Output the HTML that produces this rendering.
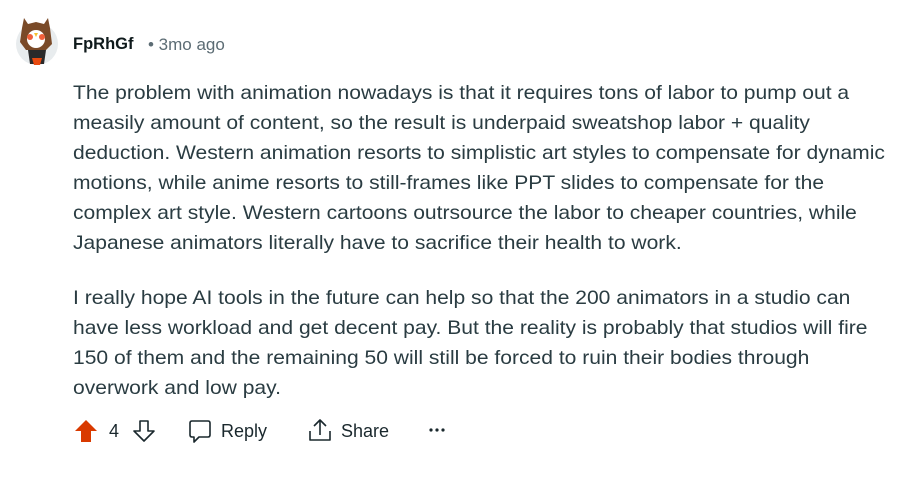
<!DOCTYPE html>
<html><head><style>
body{margin:0;width:908px;height:479px;background:#fff;font-family:"Liberation Sans",sans-serif;color:#1a282d;position:relative;overflow:hidden}
.t{position:absolute;left:73px;font-size:19.5px;line-height:30px;white-space:nowrap;color:#2a3c42;transform:scaleX(1.08);transform-origin:0 0}
.a{position:absolute;top:418px;height:26px;display:flex;align-items:center;font-size:18px;color:#1a282d}
</style></head><body>
<svg style="position:absolute;left:14px;top:14px" width="46" height="52" viewBox="0 0 46 52">
<circle cx="23" cy="30" r="21" fill="#e8ecee"/>
<path d="M8 14 L10 4 L14 10 L22 8 L30 10 L34 4 L36 14 L38 30 L32 36 L12 36 L6 28Z" fill="#7a4a28"/>
<circle cx="22" cy="25" r="9" fill="#fff"/>
<circle cx="16" cy="23" r="3" fill="#f0603a"/><circle cx="28" cy="23" r="3" fill="#f0603a"/>
<path d="M20 19 L24 19 L22 23Z" fill="#f5c030"/>
<path d="M14 36 L32 36 L30 50 L16 50Z" fill="#2a2a2a"/>
<path d="M18 44 L28 44 L26 51 L20 51Z" fill="#e84a10"/>
</svg>
<div style="position:absolute;left:73px;top:35px;font-size:16.5px;font-weight:bold;color:#0f1a1c">FpRhGf</div>
<div style="position:absolute;left:148px;top:35px;font-size:17px;color:#5c6c74">• 3mo ago</div>
<div class="t" style="top:78px">The problem with animation nowadays is that it requires tons of labor to pump out a<br>measily amount of content, so the result is underpaid sweatshop labor + quality<br>deduction. Western animation resorts to simplistic art styles to compensate for dynamic<br>motions, while anime resorts to still-frames like PPT slides to compensate for the<br>complex art style. Western cartoons outrsource the labor to cheaper countries, while<br>Japanese animators literally have to sacrifice their health to work.</div>
<div class="t" style="top:283px">I really hope AI tools in the future can help so that the 200 animators in a studio can<br>have less workload and get decent pay. But the reality is probably that studios will fire<br>150 of them and the remaining 50 will still be forced to ruin their bodies through<br>overwork and low pay.</div>
<svg style="position:absolute;left:74px;top:419px" width="24" height="24" viewBox="0 0 24 24"><path d="M12 1 L23 12 L17 12 L17 23 L7 23 L7 12 L1 12Z" fill="#d93a00"/></svg>
<div class="a" style="left:109px">4</div>
<svg style="position:absolute;left:132px;top:419px" width="24" height="24" viewBox="0 0 24 24"><path d="M8 2 L16 2 L16 12 L22 12 L12 22 L2 12 L8 12Z" fill="none" stroke="#1a282d" stroke-width="1.6" stroke-linejoin="round"/></svg>
<svg style="position:absolute;left:188px;top:419px" width="24" height="24" viewBox="0 0 24 24"><path d="M4 2 L20 2 Q22 2 22 4 L22 16 Q22 18 20 18 L11 18 L6 23 L6 18 L4 18 Q2 18 2 16 L2 4 Q2 2 4 2Z" fill="none" stroke="#1a282d" stroke-width="1.6" stroke-linejoin="round"/></svg>
<div class="a" style="left:221px">Reply</div>
<svg style="position:absolute;left:308px;top:418px" width="24" height="24" viewBox="0 0 24 24"><path d="M2 13 L2 22 L22 22 L22 13 M12 17 L12 2 M6 8 L12 2 L18 8" fill="none" stroke="#1a282d" stroke-width="1.6" stroke-linejoin="round"/></svg>
<div class="a" style="left:341px">Share</div>
<svg style="position:absolute;left:428px;top:427px" width="18" height="6" viewBox="0 0 18 6"><circle cx="3" cy="3" r="1.6" fill="#1a282d"/><circle cx="9" cy="3" r="1.6" fill="#1a282d"/><circle cx="15" cy="3" r="1.6" fill="#1a282d"/></svg>
</body></html>
